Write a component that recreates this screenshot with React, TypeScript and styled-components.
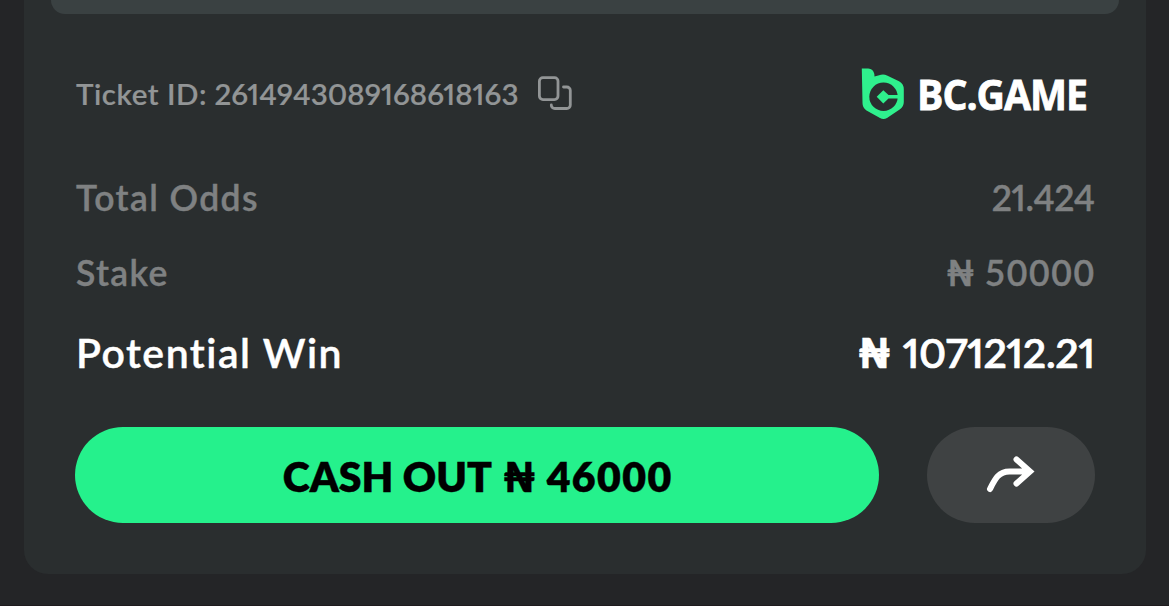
import React from 'react';
import styled, { createGlobalStyle } from 'styled-components';

const GlobalStyle = createGlobalStyle`
  * {
    box-sizing: border-box;
  }

  body {
    margin: 0;
    background: #242527;
    font-family: Lato, 'Open Sans', sans-serif;
    font-variant-ligatures: none;
    overflow: hidden;
  }
`;

const Page = styled.div`
  height: 606px;
  padding: 0 23px 0 24px;
  border-bottom: 1px solid #1f1b1e;
  overflow: hidden;
`;

const Card = styled.section`
  height: 574px;
  padding: 0 51px 0 51px;
  background: #2a2e2f;
  border-radius: 0 0 24px 24px;
`;

const MatchPanel = styled.div`
  height: 14px;
  margin: 0 -24px;
  background: #3a4142;
  border-radius: 0 0 20px 20px;
`;

const TicketRow = styled.div`
  display: flex;
  align-items: center;
  justify-content: space-between;
  height: 60px;
  margin-top: 50px;
  padding-left: 1px;
`;

const Ticket = styled.div`
  display: flex;
  align-items: center;
`;

interface TextProps {
  $size: number;
  $color: string;
  $spacing?: number;
  $weight?: number;
  $stroke?: number;
  $tabular?: boolean;
}

const Text = styled.span<TextProps>`
  font-size: ${p => p.$size}px;
  font-weight: ${p => p.$weight ?? 600};
  font-variant-numeric: ${p => (p.$tabular ? 'tabular-nums' : 'proportional-nums')};
  line-height: 1.2;
  letter-spacing: ${p => p.$spacing ?? 0}px;
  margin-right: ${p => -(p.$spacing ?? 0)}px;
  color: ${p => p.$color};
  -webkit-text-stroke: ${p => p.$stroke ?? 0.4}px ${p => p.$color};
  white-space: pre;
`;

const Amount = styled.div<{ $gap: number; $inset?: number }>`
  display: flex;
  align-items: baseline;
  gap: ${p => p.$gap}px;
  padding-right: ${p => p.$inset ?? 0}px;
`;

const Brand = styled.div`
  display: flex;
  align-items: center;
  justify-content: space-between;
  width: 226px;
  margin-right: 8px;
`;

const BrandName = styled.span`
  flex: none;
  width: 170px;
  display: flex;
  justify-content: flex-end;
  font-family: 'Open Sans', sans-serif;
  font-size: 42px;
  font-weight: 700;
  line-height: 50px;
  letter-spacing: -1.1px;
  color: #fff;
  -webkit-text-stroke: 0.8px #fff;
  transform: scaleX(0.935);
  transform-origin: right;
`;

const Row = styled.div<{ $height: number }>`
  display: flex;
  align-items: center;
  justify-content: space-between;
  height: ${p => p.$height}px;
  padding-left: 1px;
`;

const Summary = styled.div`
  padding-top: 37px;
`;

const Actions = styled.div`
  display: flex;
  gap: 48px;
  padding-top: 33px;
`;

const Button = styled.button<{ $primary?: boolean }>`
  display: flex;
  align-items: center;
  justify-content: center;
  width: ${p => (p.$primary ? 804 : 168)}px;
  height: 96px;
  padding: ${p => (p.$primary ? '4px 0 0' : '0')};
  border: none;
  border-radius: 48px;
  background: ${p => (p.$primary ? '#25f18c' : '#3f4243')};
  font-family: inherit;
`;

const CopyButton = styled.button`
  display: flex;
  margin-left: 19px;
  padding: 0 0 2px;
  border: none;
  background: none;
`;

const CopyIcon = () => (
  <svg width="36" height="36" viewBox="0 0 36 36" fill="none" stroke="#929596" strokeWidth="2.8" strokeLinecap="round">
    <rect x="2.400" y="2.600" width="18.600" height="22" rx="3.500" />
    <path d="M26.500 12h3.300a3.500 3.500 0 0 1 3.500 3.500v14.500a3.500 3.500 0 0 1-3.500 3.500h-12a3.500 3.500 0 0 1-3.500-3.500" />
  </svg>
);

const Logo = () => (
  <svg width="44" height="54" viewBox="0 0 44 54">
    <path
      fill="#2ff08d"
      d="M0.800 1.500C4 1.700 7 1.300 9.500 2Q13.500 3.500 13.500 9.500L20 7.700Q23 7 26 8.400L38 14.200Q42.800 17 42.800 22V35Q42.800 39.500 39 42.200L26 51Q22.500 53 19 51L5.500 43.500Q1.500 41 1.500 36Z"
    />
    <circle cx="22.500" cy="29.800" r="14.200" fill="#2a2e2f" />
    <path fill="#2ff08d" d="m22.300 23.200 5.200 4.800H42v3.600H27.500l-5.200 4.800-6.600-6.600z" />
  </svg>
);

const ShareIcon = () => (
  <svg width="50" height="38" viewBox="0 0 50 38" fill="none" stroke="#fff" strokeWidth="6" strokeLinecap="round">
    <path d="M4 33C9 23 12.500 15.500 23.500 15.500H43.500M30.500 3.500 44 15.500 30.500 27.500" />
  </svg>
);

export default function App() {
  return (
    <>
      <GlobalStyle />
      <Page>
        <Card>
          <MatchPanel />
          <TicketRow>
            <Ticket>
              <Text $size={29.5} $color="#929596" $stroke={0.2} $spacing={0.55}>Ticket ID: </Text>
              <Text $size={29.5} $color="#929596" $stroke={0.2} $spacing={0.05}>2614943089168618163</Text>
              <CopyButton aria-label="Copy ticket ID">
                <CopyIcon />
              </CopyButton>
            </Ticket>
            <Brand>
              <Logo />
              <BrandName>BC.GAME</BrandName>
            </Brand>
          </TicketRow>
          <Summary>
            <Row $height={75}>
              <Text $size={35.5} $color="#7f8182" $spacing={1.4}>Total Odds</Text>
              <Text $size={35.5} $color="#7f8182" $spacing={-0.4}>21.424</Text>
            </Row>
            <Row $height={75}>
              <Text $size={35.5} $color="#7f8182" $spacing={1.4}>Stake</Text>
              <Amount $gap={10} $inset={1}>
                <Text $size={35.5} $color="#7f8182" $weight={700}>₦</Text>
                <Text $size={35.5} $color="#7f8182" $spacing={1.6} $tabular>50000</Text>
              </Amount>
            </Row>
            <Row $height={83}>
              <Text $size={41} $color="#fff" $spacing={1.5}>Potential Win</Text>
              <Amount $gap={12}>
                <Text $size={41} $color="#fff" $weight={800}>₦</Text>
                <Text $size={41} $color="#fff" $spacing={-0.3} $stroke={0.7}>1071212.21</Text>
              </Amount>
            </Row>
          </Summary>
          <Actions>
            <Button $primary>
              <Amount $gap={11}>
                <Text $size={41} $color="#000" $weight={800} $spacing={0}>CASH OUT</Text>
                <Text $size={41} $color="#000" $weight={800}>₦</Text>
                <Text $size={41} $color="#000" $weight={800} $spacing={1.4} $tabular>46000</Text>
              </Amount>
            </Button>
            <Button aria-label="Share">
              <ShareIcon />
            </Button>
          </Actions>
        </Card>
      </Page>
    </>
  );
}
